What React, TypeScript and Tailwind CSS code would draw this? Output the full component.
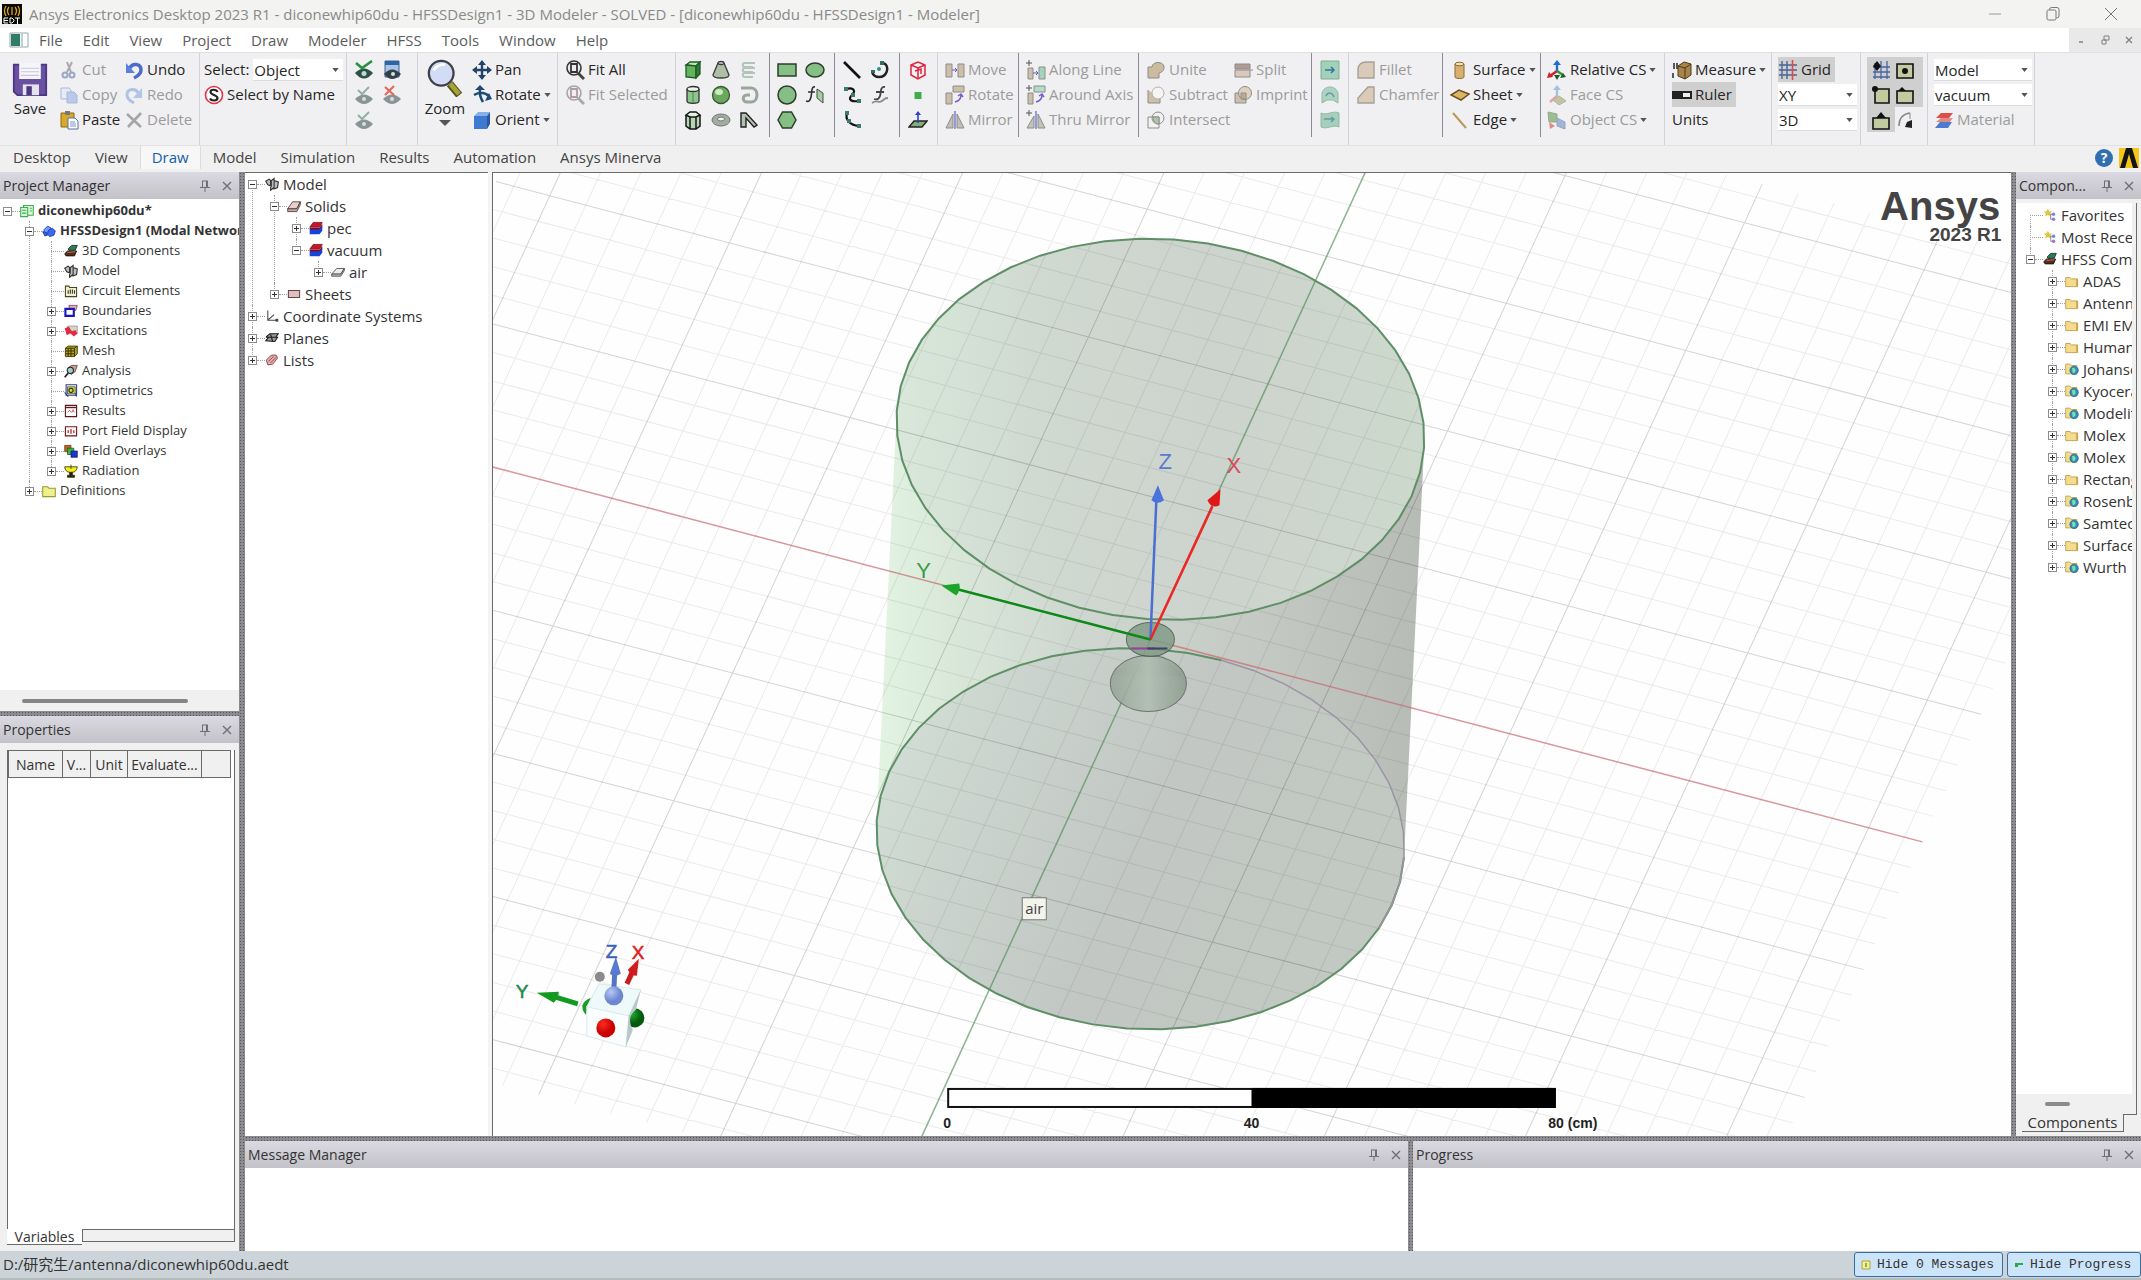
import React from 'react';

const FONT = "font-['Open_Sans','Noto_Sans_CJK_SC',sans-serif]";

const GREEN = '#86bf86';
const TAN = '#cdbfa8';
const GREY = '#8c8c8c';

// small toolbar and tree drawings, all on a 20x20 grid
const ICONS: Record<string, React.ReactNode> = {
  save: (
    <>
      <path d="M1 2h18v17H3l-2-2z" fill="#6a50a0" stroke="#4b3680" />
      <path d="M4 1h12v9H4z" fill="#f6f6fa" />
      <path d="M5 4h10M5 6h10M5 8h10" stroke="#c9c9d6" strokeWidth=".6" />
      <path d="M6 13h9v6H6z" fill="#e4e2ee" />
      <path d="M8 14h3v5H8z" fill="#4b3680" />
    </>
  ),
  cut: (
    <g fill="none" stroke="#9aa7c4" strokeWidth="2">
      <path d="M8 2l4 10M13 2L8 12" stroke="#a9a9ad" />
      <circle cx="6" cy="15" r="2.5" />
      <circle cx="13" cy="15" r="2.5" />
    </g>
  ),
  copy: (
    <g stroke="#a9b9d6" fill="#e6ecf7">
      <path d="M2 3h8l2 2v9H2z" />
      <path d="M8 7h7l3 3v8H8z" fill="#b9c9ea" />
    </g>
  ),
  paste: (
    <>
      <path d="M2 3h13v14H2z" fill="#d9a92a" stroke="#8a6a18" />
      <path d="M6 1h5v4H6z" fill="#777" />
      <path d="M9 8h7l3 3v8H9z" fill="#fff" stroke="#5570a8" />
      <path d="M11 12h5M11 14h6M11 16h6" stroke="#7c93c4" />
    </>
  ),
  undo: (
    <>
      <path d="M6 8c2-5 11-5 11 2 0 4-3 6-7 8" fill="none" stroke="#4a6cc8" strokeWidth="3.500" />
      <path d="M2 3v10h9z" fill="#5b7fe0" />
    </>
  ),
  redo: (
    <>
      <path d="M14 8C12 3 3 3 3 10c0 4 3 6 7 8" fill="none" stroke="#b0c2e2" strokeWidth="3" />
      <path d="M18 3v10H9z" fill="#b4c6e6" />
    </>
  ),
  del: <path d="M3 4l14 13M17 3L4 17" stroke="#a5a5a5" strokeWidth="2.6" />,
  selname: (
    <>
      <circle cx="10" cy="10" r="8.5" fill="#fff" stroke="#e0334a" strokeWidth="1.6" />
      <path
        d="M13.500 7c-1-3-7-3-7 0s7 3 7 6-6 3.500-7.500.5"
        fill="none"
        stroke="#222"
        strokeWidth="2.2"
      />
    </>
  ),
  eyeOn: (
    <>
      <path d="M1 13q9-9 18 0-9 11-18 0z" fill="#2c5246" />
      <circle cx="10" cy="13.500" r="2.500" fill="#b9dccd" />
      <path d="M2 3l6 5 10-7" fill="none" stroke="#2a9044" strokeWidth="2.600" />
    </>
  ),
  eyeWin: (
    <>
      <path d="M3 1h14v16H3z" fill="#a9c4e6" stroke="#3f5f8c" />
      <path d="M3 1h14v4H3z" fill="#2c64a8" />
      <path d="M2 14q8-9 17 0-9 10-17 0z" fill="#33404a" />
      <circle cx="11" cy="14" r="2" fill="#d4e2e4" />
    </>
  ),
  eyeOff: (
    <>
      <path d="M1 14q9-9 18 0-9 10-18 0z" fill="#8a9494" />
      <circle cx="10" cy="14" r="2" fill="#d6dede" />
      <path d="M4 5l4 4 7-7" fill="none" stroke="#93b0a0" strokeWidth="2" />
    </>
  ),
  eyeX: (
    <>
      <path d="M1 14q9-9 18 0-9 10-18 0z" fill="#8a9494" />
      <circle cx="10" cy="14" r="2" fill="#d6dede" />
      <path d="M3 2l9 8M12 1l-9 9" stroke="#e2685c" strokeWidth="2.200" />
    </>
  ),
  zoom: (
    <>
      <path d="M12.500 13l5 6" stroke="#55551c" strokeWidth="4" />
      <path d="M12.800 13l4.500 5.400" stroke="#a8a43c" strokeWidth="2.400" />
      <circle cx="8" cy="7.500" r="6.500" fill="#d3dcf5" stroke="#3d4048" strokeWidth="1.200" />
      <path d="M4 6q2-3.500 6-3" stroke="#fff" strokeWidth="1.500" fill="none" />
    </>
  ),
  pan: (
    <>
      <path d="M10 3v14M3 10h14" stroke="#1f4468" strokeWidth="2.400" />
      <path d="M10 0l4 5H6zM10 20l4-5H6zM0 10l5-4v8zM20 10l-5-4v8z" fill="#1f4468" />
    </>
  ),
  rotate: (
    <g fill="none" stroke="#1f4a78" strokeWidth="2.600">
      <path d="M2 10q8-5 15 1M8 3q-1 8 3 14" />
      <path d="M8 0l5 5H3zM20 14l-7 2 4-8z" fill="#1f4a78" stroke="none" />
    </g>
  ),
  orient: (
    <>
      <path d="M2 6l4-4h12l-3 4z" fill="#86b0ea" />
      <path d="M2 6h13v13H2z" fill="#3f7ad0" />
      <path d="M15 6l3-4v12l-3 5z" fill="#2858a0" />
    </>
  ),
  fit: (
    <>
      <path d="M13 13l6 6" stroke="#444" strokeWidth="3" />
      <circle cx="9" cy="8" r="7" fill="#e9e9f2" stroke="#333" strokeWidth="1.600" />
      <path d="M6 4h6v8H6z" fill="none" stroke="#333" strokeWidth="1.800" />
    </>
  ),
  fitOff: (
    <>
      <path d="M13 13l6 6" stroke="#aaa" strokeWidth="3" />
      <circle cx="9" cy="8" r="7" fill="#ededf2" stroke="#a5a5a5" strokeWidth="1.600" />
      <path d="M6 4h6v8H6z" fill="none" stroke="#b09aa4" strokeWidth="1.800" />
    </>
  ),
  box: (
    <g stroke="#1f5a24" strokeWidth="1.300">
      <path d="M3 5l4-3h10l-4 4z" fill="#bfe8b4" />
      <path d="M3 5l10 1v12l-10-1z" fill="#5fb45c" />
      <path d="M13 6l4-4v12l-4 4z" fill="#2f7a34" />
    </g>
  ),
  cylinder: (
    <g stroke="#333" strokeWidth="1.300">
      <path d="M4 4v12c0 3 12 3 12 0V4" fill="#8cc68c" />
      <ellipse cx="10" cy="4" rx="6" ry="2.500" fill="#e9f5e6" />
      <path d="M10 7v11" stroke="#5a9a5a" />
    </g>
  ),
  polyhedron: (
    <g stroke="#151515" strokeWidth="1.500">
      <path d="M3 5v11l4 3h6l4-3V5" fill="#b7d6b4" />
      <path d="M3 5l4-3h6l4 3-4 2H7zM7 7v12M13 7v12" fill="#e4f2e0" />
    </g>
  ),
  cone: (
    <g stroke="#3a3f3a" strokeWidth="1.300">
      <path d="M7 3L2 15c0 4 16 4 16 0L13 3" fill="#aebfa6" />
      <ellipse cx="10" cy="3" rx="3" ry="1.500" fill="#cfd8ea" />
    </g>
  ),
  sphere: (
    <>
      <circle cx="10" cy="10" r="8.500" fill="#6aa860" stroke="#39582f" strokeWidth="1.300" />
      <ellipse cx="8" cy="7" rx="4" ry="3" fill="#cdeabf" />
    </>
  ),
  torus: (
    <>
      <ellipse cx="10" cy="10" rx="9" ry="6" fill="#a3aca3" stroke="#6d766d" />
      <ellipse cx="10" cy="9" rx="3.500" ry="2" fill="#eef2ee" stroke="#6d766d" />
    </>
  ),
  helix: (
    <g fill="none" stroke="#b4c3b8" strokeWidth="2">
      <path d="M16 3H6c-3 0-3 4 0 4h8M16 8H6c-3 0-3 4 0 4h8M16 13H6c-3 0-3 4 0 4h8" />
    </g>
  ),
  spiral: (
    <path d="M2 3h10c8 0 8 14 0 14H8c-5 0-5-7 0-7h3" fill="none" stroke="#9aa59c" strokeWidth="3" />
  ),
  bond: <path d="M2 17V3h5l11 12-3 2-8-9v9z" fill="#b3c2b0" stroke="#222" strokeWidth="1.400" />,
  rect: <path d="M1 4h18v12H1z" fill={GREEN} stroke="#2c3f2c" strokeWidth="1.500" />,
  circle: <circle cx="10" cy="10" r="9" fill={GREEN} stroke="#2c3f2c" strokeWidth="1.500" />,
  hexagon: (
    <path d="M5.500 2h9l4.500 8-4.500 8h-9L1 10z" fill={GREEN} stroke="#2c3f2c" strokeWidth="1.500" />
  ),
  ellipse: (
    <ellipse cx="10" cy="10" rx="9" ry="7" fill={GREEN} stroke="#2c3f2c" strokeWidth="1.500" />
  ),
  eqSurface: (
    <>
      <path d="M12 4l6 4v10l-6-5z" fill="#a9cba4" stroke="#3f5240" />
      <path d="M10 2C6 1 7 8 6 12s-2 5-5 4M3 7h7" fill="none" stroke="#333" strokeWidth="1.600" />
    </>
  ),
  line: <path d="M2 2l16 16" stroke="#111" strokeWidth="2.600" />,
  spline: (
    <>
      <path d="M4 4c6-2 11 1 6 6s0 7 7 6" fill="none" stroke="#111" strokeWidth="2.200" />
      <path d="M2 2h4v4H2zM15 14h4v4h-4zM9 8h4v4H9z" fill="#3a7a70" />
    </>
  ),
  arcLine: (
    <>
      <path d="M5 3c-2 6 2 12 12 13" fill="none" stroke="#111" strokeWidth="2.200" />
      <path d="M3 1h4v4H3zM5 9h4v4H5zM15 14h4v4h-4z" fill="#3a7a70" />
    </>
  ),
  arc: (
    <>
      <path d="M14 3c6 4 3 14-5 14-4 0-6-2-7-5" fill="none" stroke="#222" strokeWidth="2.400" />
      <circle cx="9" cy="9" r="2" fill="#2f9088" />
      <path d="M10 1h4v4h-4zM1 10h4v3H1z" fill="#2f6f68" />
    </>
  ),
  eqCurve: (
    <g fill="none" stroke="#444" strokeWidth="1.800">
      <path d="M15 2c-5-1-4 6-5 9s-3 4-6 3M6 7h8" />
      <path d="M2 18c6-4 6 1 10-2s3-3 6-3" stroke={GREY} />
    </g>
  ),
  region: (
    <g fill="none" stroke="#e0233e" strokeWidth="1.500">
      <path d="M3 5l7-3 7 3v10l-7 4-7-4z" />
      <path d="M3 5l7 3 7-3M10 8v11M7 11l6-2v5" />
    </g>
  ),
  point: <path d="M6.500 7h7v7h-7z" fill="#3fae4a" />,
  plane: (
    <>
      <path d="M1 17l5-6h13l-5 6z" fill="#7fae7c" stroke="#222" strokeWidth="1.400" />
      <path d="M10 13V4" stroke="#2b3fd0" strokeWidth="1.600" />
      <path d="M10 1l3 4H7z" fill="#2b3fd0" />
    </>
  ),
  move: (
    <>
      <path d="M1 4h6v13H1zM13 4h6v13h-6z" fill={TAN} stroke={GREY} />
      <path d="M7 10h5M10 8l2 2-2 2" stroke="#5b5bd0" fill="none" />
    </>
  ),
  rot: (
    <>
      <path d="M8 1h11v6H8zM1 8h6v11H1z" fill={TAN} stroke={GREY} />
      <path d="M10 17c4-1 6-3 6-7M13 11l3-2 2 3" stroke="#7a5bd0" fill="none" strokeWidth="1.500" />
    </>
  ),
  mirror: (
    <>
      <path d="M8 4v14H1zM12 4v14h7z" fill="#c3bfb8" stroke={GREY} />
      <path d="M10 1v18" stroke="#6b6bc8" strokeWidth="1.300" />
    </>
  ),
  alongLine: (
    <>
      <path d="M3 0v6M0 3h6" stroke="#555" />
      <path d="M2 8h5v11H2z" fill={TAN} stroke={GREY} />
      <path d="M13 7h6v12h-6z" fill="#a7d3bd" stroke={GREY} />
      <path d="M7 13h5M10 11l2 2-2 2" stroke="#5b5bd0" fill="none" />
    </>
  ),
  aroundAxis: (
    <>
      <path d="M3 0v6M0 3h6" stroke="#555" />
      <path d="M8 1h11v6H8z" fill="#b4dccb" stroke={GREY} />
      <path d="M2 8h5v11H2z" fill={TAN} stroke={GREY} />
      <path d="M10 17c4-1 6-3 6-7M13 11l3-2 2 3" stroke="#7a5bd0" fill="none" strokeWidth="1.500" />
    </>
  ),
  thruMirror: (
    <>
      <path d="M3 0v6M0 3h6" stroke="#555" />
      <path d="M8 6v12H1zM12 4v14h7z" fill="#c3c3b8" stroke={GREY} />
      <path d="M10 1v18" stroke="#6b6bc8" strokeWidth="1.300" />
    </>
  ),
  unite: <path d="M2 18V7h4c0-6 12-6 12 0 0 4-2 5-5 6v5z" fill="#cdbb9e" stroke={GREY} />,
  subtract: (
    <>
      <path d="M2 5v13h12v-5" fill={TAN} stroke={GREY} />
      <circle cx="12" cy="8" r="6" fill="#f7f5f2" stroke="#b5b0aa" />
    </>
  ),
  intersect: (
    <>
      <path d="M2 7h11v11H2z" fill="#f1f1ee" stroke={GREY} />
      <circle cx="12" cy="8" r="6" fill="none" stroke={GREY} />
      <path d="M7 7h6v7c-4 0-6-3-6-7z" fill="#a9c9a4" stroke={GREY} />
    </>
  ),
  split: (
    <>
      <path d="M2 4h15v5H2z" fill="#b39a94" stroke={GREY} />
      <path d="M2 10h15v7H2z" fill="#d9c9bd" stroke={GREY} />
      <path d="M17 10h3" stroke={GREY} />
    </>
  ),
  imprint: (
    <>
      <path d="M2 8h11v10H2z" fill={TAN} stroke={GREY} />
      <circle cx="12" cy="8" r="6.500" fill="#ddd2c0" stroke={GREY} />
      <path d="M8 8h5v6H8z" fill="#c0ab8c" stroke={GREY} />
    </>
  ),
  sweepA: (
    <>
      <path d="M1 1h18v18H1z" fill="#9fd2b8" stroke="#8aa898" />
      <path d="M5 10h9M11 7l3 3-3 3" fill="none" stroke="#3f6fa0" strokeWidth="1.500" />
    </>
  ),
  sweepB: (
    <>
      <path d="M2 18V8c2-8 14-8 16 0v10l-5-3H7z" fill="#a9d4bf" stroke="#9ab5a8" />
      <path d="M6 11c2-4 6-4 8 1" fill="none" stroke="#6f93a8" strokeWidth="1.500" />
    </>
  ),
  sweepC: (
    <>
      <path d="M1 3c6 3 12-3 18 0v14c-6-3-12 3-18 0z" fill="#a3d0bd" stroke="#9ab5a8" />
      <path d="M4 9h10M11 7l3 2-3 3" fill="none" stroke="#6f93a8" strokeWidth="1.500" />
    </>
  ),
  fillet: <path d="M2 18V9q1-7 8-7h8v16z" fill="#dccab9" stroke="#a5a09a" strokeWidth="1.400" />,
  chamfer: <path d="M2 18v-5L12 2h6v16z" fill="#dccab9" stroke="#a5a09a" strokeWidth="1.400" />,
  surface: (
    <>
      <path d="M5 4v13c0 2 9 2 9 0V4" fill="#d6b06c" stroke="#8a6a3a" />
      <ellipse cx="9.500" cy="4" rx="4.500" ry="1.800" fill="#f1dcb0" stroke="#8a6a3a" />
    </>
  ),
  sheet: <path d="M1 10l8-5 10 4-8 6z" fill="#dcb468" stroke="#6e5220" strokeWidth="1.500" />,
  edge: <path d="M3 3l13 15" stroke="#b59a5a" strokeWidth="2" />,
  cs: (
    <>
      <path d="M10 3v8" stroke="#1a6fd0" strokeWidth="2.400" />
      <path d="M10 0l4 5H6z" fill="#1a6fd0" />
      <path d="M10 11l-7 5" stroke="#d0202c" strokeWidth="2.600" />
      <path d="M0 18l2-6 4 5z" fill="#d0202c" />
      <path d="M10 11l6 4" stroke="#2f9a3c" strokeWidth="2.600" />
      <path d="M19 17l-6 1 3-5zM10 20l-3-5h6z" fill="#1d5a2c" />
    </>
  ),
  csFace: (
    <>
      <path d="M10 3v8" stroke="#9fc4e0" strokeWidth="2.400" />
      <path d="M10 0l4 5H6z" fill="#9fc4e0" />
      <path d="M10 11l-7 6" stroke="#e8a0a0" strokeWidth="2.400" />
      <path d="M6 15l6-4 7 5-7 4z" fill="#c7c2a0" stroke="#a5b5a0" />
    </>
  ),
  csObj: (
    <>
      <path d="M1 2l9 2v8H2z" fill="#9ac08e" stroke="#9aa59a" />
      <path d="M10 8l8 4v7l-8-3z" fill="#9fb6da" stroke="#9aa5b5" />
      <path d="M2 12l6 4-5 3z" fill="#e08a8a" />
    </>
  ),
  measure: (
    <>
      <path d="M2 3v6M5 3v6M1 13v5" stroke="#333" strokeWidth="1.600" />
      <path d="M6 6l6-4 7 2v11l-6 4-7-3z" fill="#a8834a" stroke="#4f3a18" />
      <path d="M6 6l7 2 6-4M13 8v11" fill="none" stroke="#4f3a18" />
    </>
  ),
  ruler: (
    <>
      <path d="M0 6h20v8H0z" fill="#222" />
      <path d="M11 8h7v4h-7z" fill="#eee" />
    </>
  ),
  grid: (
    <>
      <path d="M4 1v18M9 1v18M1 5h18M1 10h18M1 15h18" stroke="#4a6496" strokeWidth="1.400" />
      <path d="M14.500 0v20" stroke="#e04848" strokeWidth="1.600" />
    </>
  ),
  snapGrid: (
    <>
      <path d="M4 3v16M10 1v18M16 1v18M2 7h17M2 12h17M2 17h17" stroke="#4a64a0" strokeWidth="1.300" />
      <path d="M6 1l4 5-4 5-4-5z" fill="#111" />
    </>
  ),
  snapCenter: (
    <>
      <path d="M2 4h16v14H2z" fill="#c2cba0" stroke="#111" strokeWidth="1.600" />
      <circle cx="10" cy="11" r="3" fill="#111" />
    </>
  ),
  snapVertex: (
    <>
      <path d="M4 4h14v14H4z" fill="#c2cba0" stroke="#111" strokeWidth="1.600" />
      <circle cx="4" cy="4" r="3" fill="#111" />
    </>
  ),
  snapEdge: (
    <>
      <path d="M2 6h16v12H2z" fill="#c2cba0" stroke="#111" strokeWidth="1.600" />
      <path d="M3 6l4-4 4 4z" fill="#111" />
    </>
  ),
  snapMid: (
    <>
      <path d="M2 8h16v11H2z" fill="#c2cba0" stroke="#111" strokeWidth="1.600" />
      <path d="M5 8l5-6 5 6z" fill="#111" />
    </>
  ),
  snapArc: (
    <>
      <path d="M4 16C4 8 8 4 15 3" fill="none" stroke="#888" strokeWidth="1.600" />
      <path d="M15 3v6" stroke="#888" />
      <path d="M12 12l5-2v8l-7-1z" fill="#222" />
    </>
  ),
  material: (
    <>
      <path d="M2 8l5-5h12l-4 5z" fill="#d8504c" />
      <path d="M2 12l5-4h12l-4 5z" fill="#e08a86" />
      <path d="M1 18l5-6h12l-4 6z" fill="#4c7ad0" />
    </>
  ),
  project: (
    <g fill="#dff7df" stroke="#36b04a" strokeWidth="1.500">
      <path d="M5 2h14v14H5z" />
      <path d="M1 5h10v13H1zM3 9h6M3 13h6M14 6h3M14 10h3" />
    </g>
  ),
  design: (
    <g fill="#3a6af0" stroke="#1a2fb0" strokeWidth="1.200">
      <path d="M3 8l5-5 5 3 1 5-6 3-5-2z" fill="#6fa0ff" />
      <path d="M9 9l6-3 4 4-2 6-6 2-3-4z" />
      <path d="M1 11l5 1 2 4-4 1z" />
    </g>
  ),
  comp3d: (
    <g strokeWidth="1.200">
      <path d="M6 7l5-5h8l-3 7H7z" fill="#2f7a5a" stroke="#142a22" />
      <path d="M1 14l4-4h13l-3 7H3z" fill="#5a2a1e" stroke="#1a0e0a" />
      <path d="M5 12l11-1" stroke="#d08a6a" />
    </g>
  ),
  model: (
    <g fill="#bdbdbd" stroke="#333" strokeWidth="1.600">
      <path d="M1 6l5-3 3 3v7l-5-2zM8 6l5-4v13l-5 4zM13 5l6 2-1 8-5 2z" />
    </g>
  ),
  circuit: (
    <g strokeWidth="1.500">
      <path d="M2 3h5l1 2h10v13H2z" fill="#f2f0cc" stroke="#4a4420" />
      <path d="M6 9v5M9 8v6M12 8v6M15 9v5" stroke="#333" />
    </g>
  ),
  boundary: (
    <>
      <path d="M7 2h12l-2 7H8z" fill="#e8b4a4" stroke="#5a2a60" />
      <path d="M2 7h12v10H2z" fill="#fff" stroke="#1818c0" strokeWidth="3" />
    </>
  ),
  excitation: (
    <>
      <path d="M5 3h14v11H5z" fill="#cfd8cf" stroke="#888" />
      <path d="M1 6l6-2 4 6 6-1 2 5-5 4-5-5-5 3z" fill="#e62840" />
    </>
  ),
  mesh: (
    <g strokeWidth="1.300">
      <path d="M2 6l4-3h13v11l-4 4H2z" fill="#b5a51c" stroke="#3f3a08" />
      <path d="M2 10h13M2 14h13M6 6v12M10 6v12M15 6v12M2 6h13l4-3" stroke="#2f2a04" fill="none" />
    </g>
  ),
  analysis: (
    <>
      <path d="M6 5l5-3h8l-3 9-6 4z" fill="#d89a8c" stroke="#333" />
      <circle cx="9" cy="9" r="4.500" fill="#9ad0c8" stroke="#222" strokeWidth="1.500" />
      <path d="M6 13l-5 6" stroke="#222" strokeWidth="2.400" />
    </>
  ),
  optimetrics: (
    <>
      <path d="M3 1h15v15H3z" fill="#fff" stroke="#2a3a90" strokeWidth="1.500" />
      <path d="M5 4h11v10H5z" fill="#d4e02c" stroke="#333" />
      <circle cx="10" cy="9" r="3" fill="none" stroke="#222" strokeWidth="1.500" />
      <path d="M1 12l5 6M16 13l2 5" stroke="#2a3a90" strokeWidth="1.500" />
    </>
  ),
  results: (
    <>
      <path d="M2 2h16v16H2z" fill="#fff" stroke="#5a1a1a" strokeWidth="1.600" />
      <path d="M2 5h16" stroke="#5a1a1a" strokeWidth="2" />
      <path d="M5 12l3-3 3 3 3-4M12 8l3 4" fill="none" stroke="#e03030" strokeWidth="1.200" />
    </>
  ),
  port: (
    <>
      <path d="M2 4h16v13H2z" fill="#fff" stroke="#6a1a1a" strokeWidth="1.600" />
      <path d="M6 13V9M10 14V7M14 13V9" stroke="#e02a2a" strokeWidth="2" />
    </>
  ),
  overlays: (
    <>
      <path d="M1 2h9v9H1z" fill="#c0602a" stroke="#5a3a10" />
      <path d="M5 6h9v9H5z" fill="#35b83a" stroke="#0f5a14" />
      <path d="M10 10h9v9h-9z" fill="#1c34d0" stroke="#0a1470" />
    </>
  ),
  radiation: (
    <g stroke="#3a3400" strokeWidth="1.200">
      <path d="M1 4h18c-1 7-5 8-9 8S2 11 1 4z" fill="#f2ee1c" />
      <path d="M8 12h4v4h3v3H5v-3h3z" fill="#222" />
      <path d="M10 1v6" />
    </g>
  ),
  folder: (
    <>
      <path d="M1 5h6l2 2h9v11H1z" fill="#f5dc8c" stroke="#b9974a" strokeWidth="1.200" />
      <path d="M16 7h2v11h-2z" fill="#cf9f3c" />
    </>
  ),
  folderYellow: (
    <path d="M1 4h7l2 2h9v12H1z" fill="#f0f08c" stroke="#9a9a30" strokeWidth="1.500" />
  ),
  folderWeb: (
    <>
      <path d="M1 3h6l2 2h8v12H1z" fill="#f3dd92" stroke="#b9a04a" strokeWidth="1.200" />
      <circle cx="13" cy="12" r="6" fill="#2f8fb8" stroke="#1c5f78" />
      <path d="M10 9q4-2 5 2t-4 5z" fill="#7fdcb4" />
    </>
  ),
  solid: (
    <g stroke="#4a3434" strokeWidth="1.200">
      <path d="M1 14L8 4h11l-5 10z" fill="#e8cfcc" />
      <path d="M1 14h13l5-10v4l-5 10H1z" fill="#c4a8a6" />
    </g>
  ),
  solidGrey: (
    <g stroke="#4a4a4a" strokeWidth="1.200">
      <path d="M1 13L8 5h11l-5 8z" fill="#ececec" />
      <path d="M1 13h13l5-8v3l-5 8H1z" fill="#bdbdbd" />
    </g>
  ),
  layers: (
    <>
      <path d="M1 9l5-7h13l-4 7z" fill="#cc1226" stroke="#5a0a14" />
      <path d="M1 10h14l4-6v5l-4 4H1z" fill="#7a0a1c" />
      <path d="M1 12h14l4-4v6l-4 5H1z" fill="#1444dc" />
    </>
  ),
  sheets: <path d="M2 5h16v10H2z" fill="#e0bfbf" stroke="#6a4444" strokeWidth="1.500" />,
  axes: (
    <>
      <path d="M4 2v14h13M4 16l9-8" fill="none" stroke="#444" strokeWidth="1.500" />
      <path d="M15 14h4v4h-4z" fill="#444" />
    </>
  ),
  planes: (
    <g fill="#9a9a9a" stroke="#1a1a1a" strokeWidth="1.500">
      <path d="M2 8l5-4h12l-4 5H2zM1 14l4-5h13l-4 6z" />
      <path d="M8 5l3 10" />
    </g>
  ),
  lists: (
    <g fill="#e0aeb0" stroke="#8a4448" strokeWidth="1.300">
      <path d="M2 10l7-7h7l2 4-7 9-7 1z" />
      <path d="M5 12l7-7M8 14l8-8" />
    </g>
  ),
  fav: (
    <>
      <path d="M7 1l2 4h4l-3 3 1 4-4-2-4 2 1-4-3-3h4z" fill="#e0c43c" />
      <path d="M11 8v8h3M11 9h4" stroke="#666" fill="none" />
      <circle cx="15" cy="9" r="2.500" fill="#6f8ae0" />
      <circle cx="15" cy="16" r="2.500" fill="#9a7ad8" />
    </>
  ),
};

type IconProps = { name: string; className?: string };

const Icon = ({ name, className = 'h-5 w-5' }: IconProps) => (
  <svg viewBox="0 0 20 20" className={`${className} flex-none`} aria-hidden="true">
    {ICONS[name]}
  </svg>
);

const Caret = () => (
  <svg viewBox="0 0 8 5" className="h-1 w-[7px] flex-none" aria-hidden="true">
    <path d="M0 0h8L4 5z" fill="#555" />
  </svg>
);

type ToolProps = {
  icon?: string;
  label?: string;
  disabled?: boolean;
  arrow?: boolean;
  active?: boolean;
};

const Tool = ({ icon, label, disabled, arrow, active }: ToolProps) => (
  <button
    type="button"
    disabled={disabled}
    aria-label={label ?? icon}
    className={`flex h-[25px] items-center gap-[3px] whitespace-nowrap ${
      disabled ? 'text-[#9b9b9b]' : 'text-[#262626]'
    } ${active ? 'bg-[#cfcfcf] pr-1' : ''}`}
  >
    {icon && <Icon name={icon} />}
    {label && <span>{label}</span>}
    {arrow && <Caret />}
  </button>
);

type ColProps = { className: string; children: React.ReactNode };

const Col = ({ className, children }: ColProps) => (
  <div className={`flex flex-none flex-col items-start ${className}`}>{children}</div>
);

const Group = ({ className, children }: ColProps) => (
  <div className={`flex h-full flex-none border-r border-[#d2d2dc] pt-1 ${className}`}>
    {children}
  </div>
);

const Divided = ({ className, children }: ColProps) => (
  <div className={`flex h-[84px] flex-none self-start border-r border-[#8a8a96] pt-1 ${className}`}>
    {children}
  </div>
);

type DropProps = { label: string; value: string; className: string };

const Drop = ({ label, value, className }: DropProps) => (
  <div className={`relative flex items-center ${className}`}>
    <select
      aria-label={label}
      defaultValue={value}
      className="h-full w-full appearance-none border-b border-[#dcdcdc] bg-white pl-px text-[#262626]"
    >
      <option>{value}</option>
    </select>
    <span className="pointer-events-none absolute right-1">
      <Caret />
    </span>
  </div>
);

const MENUS = ['File', 'Edit', 'View', 'Project', 'Draw', 'Modeler', 'HFSS', 'Tools', 'Window', 'Help'];
const TABS = ['Desktop', 'View', 'Draw', 'Model', 'Simulation', 'Results', 'Automation', 'Ansys Minerva'];

const TitleBar = () => (
  <header className="flex h-7 flex-none items-center bg-[#f3f3f1] pl-[2px] text-[15px] text-[#8a8a8a]">
    <svg viewBox="0 0 20 20" className="h-5 w-5 flex-none" aria-hidden="true">
      <path d="M0 0h20v20H0z" fill="#0c0b08" />
      <g fill="none" stroke="#d9a520" strokeWidth="1.300">
        <path d="M7 3q-3 4 0 8M4 2q-3 5 0 10M13 3q3 4 0 8M16 2q3 5 0 10" />
        <path d="M10 3v8" />
      </g>
      <path
        d="M2 14h4M2 16.500h4M2 19h4M2 14v5M8 14v5h2l2-2v-1l-2-2zM13 14h5M15.500 14v6"
        stroke="#fff"
        fill="none"
      />
    </svg>
    <h1 className="ml-[7px] flex-1 truncate">
      Ansys Electronics Desktop 2023 R1 - diconewhip60du - HFSSDesign1 - 3D Modeler - SOLVED -
      [diconewhip60du - HFSSDesign1 - Modeler]
    </h1>
    <div className="flex gap-[42px] pr-[22px]">
      <button type="button" aria-label="Minimize">
        <svg viewBox="0 0 16 16" className="h-4 w-4">
          <path d="M2 8h12" stroke="#9a9a9a" />
        </svg>
      </button>
      <button type="button" aria-label="Restore">
        <svg viewBox="0 0 16 16" className="h-4 w-4" fill="none" stroke="#777">
          <rect x="2" y="4" width="9" height="10" rx="1.500" />
          <path d="M4.500 4V3.500q0-2 2-2H12q2 0 2 2V10q0 2-2.500 2" />
        </svg>
      </button>
      <button type="button" aria-label="Close">
        <svg viewBox="0 0 16 16" className="h-4 w-4">
          <path d="M2 2l12 12M14 2L2 14" stroke="#777" />
        </svg>
      </button>
    </div>
  </header>
);

const MenuBar = () => (
  <nav className="flex h-6 flex-none items-center bg-white pl-[9px] text-[15px] text-[#5c5c5c]">
    <svg viewBox="0 0 20 16" className="mr-[10px] h-4 w-5 flex-none" aria-hidden="true">
      <path d="M1 1h18v14H1z" fill="#fff" stroke="#9aa5a5" />
      <path d="M2 2h9v12H2z" fill="#2f7d68" />
      <path d="M13 2v12" stroke="#b5d8cc" strokeWidth="2" />
    </svg>
    <div className="flex flex-1 gap-5">
      {MENUS.map((m) => (
        <button key={m} type="button">
          {m}
        </button>
      ))}
    </div>
    <div className="flex h-full w-[72px] items-center justify-around bg-[#e9e9e9] text-[#808080]">
      <button type="button" aria-label="Minimize document">
        <svg viewBox="0 0 10 10" className="h-2.5 w-2.5">
          <path d="M3 7h4" stroke="currentColor" strokeWidth="1.500" />
        </svg>
      </button>
      <button type="button" aria-label="Restore document">
        <svg viewBox="0 0 10 10" className="h-2.5 w-2.5" fill="none" stroke="currentColor">
          <path d="M4 1h5v4H4zM2 5h4v4H2z" />
        </svg>
      </button>
      <button type="button" aria-label="Close document">
        <svg viewBox="0 0 10 10" className="h-2.5 w-2.5">
          <path d="M2 2l6 6M8 2L2 8" stroke="currentColor" strokeWidth="1.300" />
        </svg>
      </button>
    </div>
  </nav>
);

const Ribbon = () => (
  <div className="flex h-[93px] flex-none overflow-hidden border-t border-[#e0e0e0] bg-[#f0f0f2] text-[15px]">
    <Group className="w-[200px] pl-[5px]">
      <button
        type="button"
        className="flex w-[50px] flex-none flex-col items-center pt-1 text-[#262626]"
      >
        <Icon name="save" className="h-9 w-9" />
        <span>Save</span>
      </button>
      <Col className="w-[67px] pl-1">
        <Tool icon="cut" label="Cut" disabled />
        <Tool icon="copy" label="Copy" disabled />
        <Tool icon="paste" label="Paste" />
      </Col>
      <Col className="pl-0.5">
        <Tool icon="undo" label="Undo" />
        <Tool icon="redo" label="Redo" disabled />
        <Tool icon="del" label="Delete" disabled />
      </Col>
    </Group>
    <Group className="w-[147px] pl-1">
      <Col className="w-full">
        <label className="flex h-[25px] w-full items-center gap-1 text-[#262626]">
          Select:
          <Drop label="Select" value="Object" className="h-[22px] w-[90px]" />
        </label>
        <Tool icon="selname" label="Select by Name" />
      </Col>
    </Group>
    <Group className="w-[71px] pl-[7px]">
      <Col className="w-7">
        <Tool icon="eyeOn" />
        <Tool icon="eyeOff" />
        <Tool icon="eyeOff" />
      </Col>
      <Col className="w-7">
        <Tool icon="eyeWin" />
        <Tool icon="eyeX" />
      </Col>
    </Group>
    <Group className="w-[140px] pl-1">
      <button
        type="button"
        className="flex w-[46px] flex-none flex-col items-center pt-[2px] text-[#262626]"
      >
        <Icon name="zoom" className="h-[38px] w-[38px]" />
        <span>Zoom</span>
        <svg viewBox="0 0 12 6" className="h-1.5 w-3" aria-hidden="true">
          <path d="M0 0h12L6 6z" fill="#555" />
        </svg>
      </button>
      <Col className="pl-1">
        <Tool icon="pan" label="Pan" />
        <Tool icon="rotate" label="Rotate" arrow />
        <Tool icon="orient" label="Orient" arrow />
      </Col>
    </Group>
    <Group className="w-[118px] pl-[7px]">
      <Col className="w-full">
        <Tool icon="fit" label="Fit All" />
        <Tool icon="fitOff" label="Fit Selected" disabled />
      </Col>
    </Group>
    <Divided className="w-[94px] gap-2 pl-[7px]">
      <Col className="w-5">
        <Tool icon="box" />
        <Tool icon="cylinder" />
        <Tool icon="polyhedron" />
      </Col>
      <Col className="w-5">
        <Tool icon="cone" />
        <Tool icon="sphere" />
        <Tool icon="torus" />
      </Col>
      <Col className="w-5">
        <Tool icon="helix" />
        <Tool icon="spiral" />
        <Tool icon="bond" />
      </Col>
    </Divided>
    <Divided className="w-[65px] gap-2 pl-[7px]">
      <Col className="w-5">
        <Tool icon="rect" />
        <Tool icon="circle" />
        <Tool icon="hexagon" />
      </Col>
      <Col className="w-5">
        <Tool icon="ellipse" />
        <Tool icon="eqSurface" />
      </Col>
    </Divided>
    <Divided className="w-[65px] gap-2 pl-[7px]">
      <Col className="w-5">
        <Tool icon="line" />
        <Tool icon="spline" />
        <Tool icon="arcLine" />
      </Col>
      <Col className="w-5">
        <Tool icon="arc" />
        <Tool icon="eqCurve" />
      </Col>
    </Divided>
    <Group className="w-[38px] pl-2">
      <Col className="w-5">
        <Tool icon="region" />
        <Tool icon="point" />
        <Tool icon="plane" />
      </Col>
    </Group>
    <Divided className="w-[81px] pl-[7px]">
      <Col className="w-full">
        <Tool icon="move" label="Move" disabled />
        <Tool icon="rot" label="Rotate" disabled />
        <Tool icon="mirror" label="Mirror" disabled />
      </Col>
    </Divided>
    <Divided className="w-[120px] pl-[7px]">
      <Col className="w-full">
        <Tool icon="alongLine" label="Along Line" disabled />
        <Tool icon="aroundAxis" label="Around Axis" disabled />
        <Tool icon="thruMirror" label="Thru Mirror" disabled />
      </Col>
    </Divided>
    <Divided className="w-[173px] pl-[7px]">
      <Col className="w-[87px]">
        <Tool icon="unite" label="Unite" disabled />
        <Tool icon="subtract" label="Subtract" disabled />
        <Tool icon="intersect" label="Intersect" disabled />
      </Col>
      <Col className="w-[76px]">
        <Tool icon="split" label="Split" disabled />
        <Tool icon="imprint" label="Imprint" disabled />
      </Col>
    </Divided>
    <Group className="w-[37px] pl-2">
      <Col className="w-5">
        <Tool icon="sweepA" disabled />
        <Tool icon="sweepB" disabled />
        <Tool icon="sweepC" disabled />
      </Col>
    </Group>
    <Divided className="w-[94px] pl-[7px]">
      <Col className="w-full">
        <Tool icon="fillet" label="Fillet" disabled />
        <Tool icon="chamfer" label="Chamfer" disabled />
      </Col>
    </Divided>
    <Divided className="w-[98px] pl-[7px]">
      <Col className="w-full">
        <Tool icon="surface" label="Surface" arrow />
        <Tool icon="sheet" label="Sheet" arrow />
        <Tool icon="edge" label="Edge" arrow />
      </Col>
    </Divided>
    <Group className="w-[124px] pl-1.5">
      <Col className="w-full">
        <Tool icon="cs" label="Relative CS" arrow />
        <Tool icon="csFace" label="Face CS" disabled />
        <Tool icon="csObj" label="Object CS" disabled arrow />
      </Col>
    </Group>
    <Group className="w-[107px] pl-[7px]">
      <Col className="w-full">
        <Tool icon="measure" label="Measure" arrow />
        <Tool icon="ruler" label="Ruler" active />
        <Tool label="Units" />
      </Col>
    </Group>
    <Group className="w-[89px] pl-1.5">
      <Col className="w-[79px]">
        <Tool icon="grid" label="Grid" active />
        <div className="flex h-[50px] w-full flex-col justify-around">
          <Drop label="Plane" value="XY" className="h-[22px] w-full" />
          <Drop label="Movement" value="3D" className="h-[22px] w-full" />
        </div>
      </Col>
    </Group>
    <Group className="w-[67px] pl-1.5">
      <Col className="w-7 self-start bg-[#cfcfcf] pl-1">
        <Tool icon="snapGrid" />
        <Tool icon="snapVertex" />
        <Tool icon="snapMid" />
      </Col>
      <Col className="w-7">
        <span className="bg-[#cfcfcf] pr-2">
          <Tool icon="snapCenter" />
          <Tool icon="snapEdge" />
        </span>
        <Tool icon="snapArc" />
      </Col>
    </Group>
    <Group className="w-[107px] pl-1.5">
      <Col className="w-[98px]">
        <div className="flex h-[50px] w-full flex-col justify-around">
          <Drop label="Object type" value="Model" className="h-[22px] w-full" />
          <Drop label="Material" value="vacuum" className="h-[22px] w-full" />
        </div>
        <Tool icon="material" label="Material" disabled />
      </Col>
    </Group>
  </div>
);

const TabBar = () => (
  <div className="mb-[3px] flex h-6 flex-none items-center border-t border-[#e2e2e2] bg-[#f0f0f0] pl-px text-[15px] text-[#444]">
    {TABS.map((t) => (
      <button
        key={t}
        type="button"
        className={`h-full border-x px-[11px] ${
          t === 'Draw' ? 'border-[#dcdcdc] bg-[#f7f7f7] text-[#1560a8]' : 'border-transparent'
        }`}
      >
        {t}
      </button>
    ))}
    <div className="flex flex-1 items-center justify-end gap-1.5 pr-0.5">
      <button
        type="button"
        aria-label="Help"
        className="flex h-[18px] w-[18px] items-center justify-center rounded-full bg-[#2f6fb0] text-sm font-bold text-white"
      >
        ?
      </button>
      <svg viewBox="0 0 20 20" className="h-5 w-5" aria-hidden="true">
        <path d="M0 0h20v20H0z" fill="#f5c518" />
        <path d="M1 20L7 0h6l6 20h-5L10 6 6 20z" fill="#141414" />
      </svg>
    </div>
  </div>
);

const Pin = () => (
  <svg viewBox="0 0 12 12" className="h-3 w-3" fill="none" stroke="#6f6f78" aria-hidden="true">
    <path d="M3.500 1v6M7.500 1v6M8.500 1v6M3 1h6M1 7.500h10M6 8v4" />
  </svg>
);

const PanelHeader = ({ title }: { title: string }) => (
  <div className="flex h-[27px] flex-none items-center bg-linear-to-b from-[#dbd9e2] to-[#c2c2c8] pl-[3px] text-sm text-[#333]">
    <h2 className="flex-1 truncate">{title}</h2>
    <div className="flex items-center gap-2.5 pr-[6px]">
      <button type="button" aria-label={`Pin ${title}`}>
        <Pin />
      </button>
      <button type="button" aria-label={`Close ${title}`}>
        <svg viewBox="0 0 12 12" className="h-3 w-3">
          <path d="M2 2l8 8M10 2l-8 8" stroke="#6f6f78" strokeWidth="1.400" />
        </svg>
      </button>
    </div>
  </div>
);

const Splitter = ({ className }: { className: string }) => (
  <div
    className={`flex-none bg-[#8b8b90] bg-[radial-gradient(#55555c_1px,transparent_1px)] bg-[length:3px_3px] ${className}`}
  />
);

type Node = {
  label: string;
  icon: string;
  open?: boolean;
  bold?: boolean;
  leaf?: boolean;
  children?: Node[];
};

const leaf = (label: string, icon: string): Node => ({ label, icon, leaf: true });
const closed = (label: string, icon: string): Node => ({ label, icon });

const PROJECT: Node[] = [
  {
    label: 'diconewhip60du*',
    icon: 'project',
    open: true,
    bold: true,
    children: [
      {
        label: 'HFSSDesign1 (Modal Network)',
        icon: 'design',
        open: true,
        bold: true,
        children: [
          leaf('3D Components', 'comp3d'),
          leaf('Model', 'model'),
          leaf('Circuit Elements', 'circuit'),
          closed('Boundaries', 'boundary'),
          closed('Excitations', 'excitation'),
          leaf('Mesh', 'mesh'),
          closed('Analysis', 'analysis'),
          leaf('Optimetrics', 'optimetrics'),
          closed('Results', 'results'),
          closed('Port Field Display', 'port'),
          closed('Field Overlays', 'overlays'),
          closed('Radiation', 'radiation'),
        ],
      },
      closed('Definitions', 'folderYellow'),
    ],
  },
];

const MODEL: Node[] = [
  {
    label: 'Model',
    icon: 'model',
    open: true,
    children: [
      {
        label: 'Solids',
        icon: 'solid',
        open: true,
        children: [
          closed('pec', 'layers'),
          { label: 'vacuum', icon: 'layers', open: true, children: [closed('air', 'solidGrey')] },
        ],
      },
      closed('Sheets', 'sheets'),
    ],
  },
  closed('Coordinate Systems', 'axes'),
  closed('Planes', 'planes'),
  closed('Lists', 'lists'),
];

const COMPONENTS: Node[] = [
  leaf('Favorites', 'fav'),
  leaf('Most Recently Used', 'fav'),
  {
    label: 'HFSS Components',
    icon: 'comp3d',
    open: true,
    children: [
      closed('ADAS', 'folder'),
      closed('Antennas', 'folder'),
      closed('EMI EMC', 'folder'),
      closed('Human', 'folder'),
      closed('Johanson', 'folderWeb'),
      closed('Kyocera', 'folderWeb'),
      closed('Modelithics', 'folderWeb'),
      closed('Molex', 'folder'),
      closed('Molex', 'folderWeb'),
      closed('Rectangular', 'folder'),
      closed('Rosenberger', 'folderWeb'),
      closed('Samtec', 'folderWeb'),
      closed('Surface', 'folder'),
      closed('Wurth', 'folderWeb'),
    ],
  },
];

type TreeProps = { nodes: Node[]; row: string; root?: boolean };

const Tree = ({ nodes, row, root }: TreeProps) => (
  <ul className={root ? '' : 'pl-[22px]'}>
    {nodes.map((n, i) => {
      const first = root && i === 0;
      const last = i === nodes.length - 1;
      // dotted guide down the toggle column, cut to half a row at either end
      let guide = 'before:top-0 before:bottom-0';
      if (first && last) guide = 'before:hidden';
      else if (first) guide = 'before:top-[11px] before:bottom-0';
      else if (last) guide = 'before:top-0 before:h-[10px]';
      return (
        <li
          key={`${n.label}${i}`}
          className={`relative before:absolute before:left-[11px] before:border-l before:border-dotted before:border-[#a0a0a0] ${guide}`}
        >
          <div className={`flex items-center whitespace-nowrap ${row} ${n.bold ? 'font-bold' : ''}`}>
            {n.leaf ? (
              <span className="w-[11px] flex-none" />
            ) : (
              <button
                type="button"
                aria-label={`Toggle ${n.label}`}
                className="relative ml-[7px] h-[9px] w-[9px] flex-none border border-[#8c8c8c] bg-white"
              >
                <svg viewBox="0 0 7 7" className="h-[7px] w-[7px]" aria-hidden="true">
                  <path d={n.open ? 'M1 3.500h5' : 'M1 3.500h5M3.500 1v5'} stroke="#333" />
                </svg>
              </button>
            )}
            <span
              className={`flex-none border-t border-dotted border-[#a0a0a0] ${n.leaf ? 'w-[13px]' : 'w-2'}`}
            />
            <Icon name={n.icon} className="h-[14px] w-[14px]" />
            <span className="pl-1">{n.label}</span>
          </div>
          {n.children && <Tree nodes={n.children} row={row} />}
        </li>
      );
    })}
  </ul>
);

const ProjectManager = () => (
  <section className="flex min-h-0 flex-[539] flex-col">
    <PanelHeader title="Project Manager" />
    <div className="-ml-1 flex-1 overflow-hidden bg-white pt-[2px] text-[13px] text-[#333]">
      <Tree nodes={PROJECT} row="h-5" root />
    </div>
    <div className="flex h-[21px] flex-none items-center bg-[#f0f0f0] pl-[22px]">
      <div className="h-1 w-[166px] rounded-full bg-[#858585]" />
    </div>
  </section>
);

const PROPERTY_COLS = [
  { label: 'Name', width: 'w-[54px]' },
  { label: 'V...', width: 'w-[28px]' },
  { label: 'Unit', width: 'w-[37px]' },
  { label: 'Evaluate...', width: 'w-[74px]' },
  { label: '', width: 'w-[29px]' },
];

const Properties = () => (
  <section className="flex min-h-0 flex-[535] flex-col bg-[#f0f0f0]">
    <PanelHeader title="Properties" />
    <div className="mr-1 flex min-h-0 flex-1 flex-col pt-[7px] pb-[6px] pl-[7px]">
      <div className="flex-1 border-r border-l border-[#6a6a6a] bg-white pr-1">
        <table className="w-full table-fixed border-collapse text-[14px] text-[#333]">
          <thead>
            <tr className="h-[27px] bg-[#f0f0f0]">
              {PROPERTY_COLS.map((c) => (
                <th
                  key={c.label || 'blank'}
                  className={`border border-[#6a6a6a] p-0 text-center font-normal ${c.width}`}
                >
                  {c.label}
                </th>
              ))}
            </tr>
          </thead>
        </table>
      </div>
      <div className="flex h-4 flex-none text-[14px] leading-4 text-[#333]">
        <button type="button" className="w-[75px] border-b border-[#6a6a6a] bg-white">
          Variables
        </button>
        <div className="mb-[3px] flex-1 border border-[#6a6a6a]" />
      </div>
    </div>
  </section>
);

const ORIGIN = { x: 1151, y: 640 };
const STEPS = Array.from({ length: 43 }, (_, i) => i - 21);
const REACH = 21.5;

// grid cell (a, b) to drawing coordinates
const at = (a: number, b: number): [number, number] => [
  ORIGIN.x + a * 35.87 - b * 11.74,
  ORIGIN.y + a * 9.405 + b * 25.52,
];

const seg = (a1: number, b1: number, a2: number, b2: number) => {
  const [x1, y1] = at(a1, b1);
  const [x2, y2] = at(a2, b2);
  return `M${x1.toFixed(1)} ${y1.toFixed(1)}L${x2.toFixed(1)} ${y2.toFixed(1)}`;
};

const lines = (keep: (n: number) => boolean) =>
  STEPS.filter(keep)
    .map((n) => seg(n, -REACH, n, REACH) + seg(-REACH, n, REACH, n))
    .join('');

const MINOR = lines((n) => n % 5 !== 0);
const MAJOR = lines((n) => n % 5 === 0 && n !== 0);

// faceted rim of the air cylinder, tilted by four degrees; 48 facets all round
const rim = (cx: number, cy: number, from = 0, to = 48) => {
  const tilt = (4 * Math.PI) / 180;
  const pts: string[] = [];
  for (let i = from; i <= to; i++) {
    const t = (i * Math.PI) / 24;
    const x = 264 * Math.cos(t);
    const y = 190 * Math.sin(t);
    const px = cx + x * Math.cos(tilt) - y * Math.sin(tilt);
    const py = cy + x * Math.sin(tilt) + y * Math.cos(tilt);
    pts.push(`${px.toFixed(1)} ${py.toFixed(1)}`);
  }
  return pts.join('L');
};

const TOP = rim(1161, 430);
const BOTTOM = rim(1141, 839);
const HULL = `M${rim(1141, 839, 0, 24)}L${rim(1161, 430, 24, 48)}z`;

const Viewport = () => (
  <div className="min-w-0 flex-1 overflow-hidden border-t border-l border-[#6a6a6a] bg-[#fefefe]">
    <svg
      viewBox="493 174 1519 962"
      preserveAspectRatio="xMidYMid slice"
      className="block h-full w-full font-['Liberation_Sans',sans-serif]"
      role="img"
      aria-label="3D model view"
    >
      <defs>
        <linearGradient id="wall">
          <stop offset="0" stopColor="#e3f4e3" />
          <stop offset=".12" stopColor="#dae9da" />
          <stop offset=".35" stopColor="#cfd8d0" />
          <stop offset=".65" stopColor="#c6cbc6" />
          <stop offset="1" stopColor="#b6bbb6" />
        </linearGradient>
        <linearGradient id="cap">
          <stop offset="0" stopColor="#d9e8da" />
          <stop offset=".25" stopColor="#d0dad1" />
          <stop offset=".6" stopColor="#cdd3cd" />
          <stop offset="1" stopColor="#cdd9cd" />
        </linearGradient>
        <linearGradient id="foot" x1="0" y1="0" x2="1" y2=".3">
          <stop offset="0" stopColor="#d3e2d8" />
          <stop offset=".3" stopColor="#cad3cd" />
          <stop offset=".6" stopColor="#c2c7c3" />
          <stop offset="1" stopColor="#c2c8c2" />
        </linearGradient>
        <linearGradient id="cone">
          <stop offset="0" stopColor="#93a394" />
          <stop offset=".5" stopColor="#b0beb1" />
          <stop offset="1" stopColor="#8b998c" />
        </linearGradient>
        <radialGradient id="blueBall" cx=".35" cy=".3">
          <stop offset="0" stopColor="#b9c8f5" />
          <stop offset="1" stopColor="#6d86d0" />
        </radialGradient>
        <radialGradient id="redBall" cx=".35" cy=".3">
          <stop offset="0" stopColor="#ff2a20" />
          <stop offset="1" stopColor="#c80000" />
        </radialGradient>
        <radialGradient id="greenBall" cx=".35" cy=".3">
          <stop offset="0" stopColor="#1fae2c" />
          <stop offset="1" stopColor="#035a0c" />
        </radialGradient>
      </defs>

      {/* air cylinder, with the grid seen through it */}
      <path d={HULL} fill="url(#wall)" />
      <path d={`M${BOTTOM}z`} fill="url(#foot)" />
      <path d={`M${TOP}z`} fill="url(#cap)" />

      <path d={MINOR} stroke="#000" strokeOpacity=".08" />
      <path d={MAJOR} stroke="#000" strokeOpacity=".17" />
      <path d={seg(-REACH, 0, REACH, 0)} stroke="#c86a70" strokeOpacity=".7" strokeWidth="1.500" />
      <path d={seg(0, -REACH, 0, REACH)} stroke="#4f8a55" strokeOpacity=".65" strokeWidth="1.500" />

      <path d={`M${TOP}z`} fill="none" stroke="#5f8f66" strokeWidth="2" />
      <path d={`M${rim(1141, 839, 0, 38)}`} fill="none" stroke="#5f8f66" strokeWidth="2" />
      <path d={`M${rim(1141, 839, 38, 51)}`} fill="none" stroke="#9c94a4" strokeWidth="1.500" />

      {/* dicone */}
      <path d="M1143 652L1112 676L1184 676L1159 652z" fill="url(#cone)" opacity=".5" />
      <ellipse cx="1149" cy="684" rx="38" ry="28" fill="url(#cone)" stroke="#5c665e" opacity=".85" />
      <ellipse cx="1151" cy="640" rx="24" ry="17" fill="#7f9a86" stroke="#46524a" opacity=".8" />
      <path d="M1132 649h24" stroke="#9a3f9a" strokeWidth="2" />
      <path d="M1148 649h20" stroke="#3f3f6a" strokeWidth="2" />

      {/* coordinate axes at the origin */}
      <path d="M1151 640L1157 500" stroke="#4a6fd0" strokeWidth="2.500" />
      <path d="M1158.500 486L1164.500 501Q1158 506 1152 501z" fill="#4a74dc" />
      <path d="M1151 640L1213 507" stroke="#f02424" strokeWidth="2.500" />
      <path d="M1221 490L1220 506Q1212 510 1208 501z" fill="#e01818" />
      <path d="M1151 640L959 590" stroke="#0c8a18" strokeWidth="2.500" />
      <path d="M942 586L960 584Q962 590 957 596z" fill="#1aa52a" />
      <g fontSize="22">
        <text x="1159" y="470" fill="#5a7ad0">Z</text>
        <text x="1227" y="474" fill="#d8485a">X</text>
        <text x="917" y="579" fill="#3f9a48">Y</text>
      </g>

      <rect x="1023" y="898" width="24" height="22" fill="#f3f5ec" stroke="#777" />
      <text
        x="1035"
        y="914"
        fontSize="15"
        textAnchor="middle"
        fill="#444"
        className="font-['Open_Sans',sans-serif]"
      >
        air
      </text>

      {/* view triad */}
      <g>
        <circle cx="601" cy="977" r="5" fill="#8a8a8a" />
        <path d="M592 998q-14 6-5 17z" fill="#1c9a2a" />
        <circle cx="636" cy="1018" r="9.500" fill="url(#greenBall)" />
        <path d="M600 984L642 990L630 1016L588 1007z" fill="#eefafa" stroke="#dbe8ea" />
        <path d="M588 1007L630 1016L627 1047L588 1036z" fill="#fafefe" stroke="#dbe8ea" />
        <path d="M642 990L630 1016L627 1047L634 1030Q627 1018 637 1010z" fill="#b9c6ca" />
        <path d="M615 990L616 970" stroke="#5474c8" strokeWidth="5" />
        <path d="M617 957L622 974Q616 978 611 974z" fill="#5a7ad0" />
        <path d="M628 984L634 971" stroke="#c81c1c" strokeWidth="5" />
        <path d="M640 959L638 976Q632 976 629 970z" fill="#d01c1c" />
        <path d="M579 1004L556 997" stroke="#129a20" strokeWidth="5" />
        <path d="M538 993L560 992Q560 998 555 1003z" fill="#129a20" />
        <circle cx="615" cy="996" r="9.500" fill="url(#blueBall)" />
        <circle cx="607" cy="1028" r="9.500" fill="url(#redBall)" />
        <g fontSize="19" strokeWidth=".5">
          <text x="607" y="958" fill="#3a5fb8" stroke="#3a5fb8">Z</text>
          <text x="633" y="959" fill="#e02020" stroke="#e02020">X</text>
          <text x="517" y="998" fill="#1a8a4a" stroke="#1a8a4a">Y</text>
        </g>
      </g>

      <rect x="949" y="1089" width="606" height="18" fill="#fff" stroke="#111" strokeWidth="2" />
      <rect x="1252" y="1088" width="304" height="20" fill="#000" />
      <g fontSize="14" fontWeight="700" fill="#222" textAnchor="middle">
        <text x="948" y="1128">0</text>
        <text x="1252" y="1128">40</text>
        <text x="1573" y="1128">80 (cm)</text>
      </g>

      <g fontWeight="700" fill="#444" textAnchor="end">
        <text x="2000" y="221" fontSize="40">Ansys</text>
        <text x="2001" y="242" fontSize="19">2023 R1</text>
      </g>
    </svg>
  </div>
);

const ComponentsPanel = () => (
  <section className="flex w-[125px] flex-none flex-col bg-[#f0f0f0]">
    <PanelHeader title="Compon..." />
    <div className="mt-1 mr-1 flex min-h-0 flex-1 flex-col border-r border-[#6a6a6a] pr-1">
      <div className="flex-1 overflow-hidden bg-white pt-px pl-[3px] text-[15px] text-[#333]">
        <Tree nodes={COMPONENTS} row="h-[22px]" root />
      </div>
      <div className="flex h-5 flex-none items-center pl-[29px]">
        <div className="h-1 w-[25px] rounded-full bg-[#8a8a8a]" />
      </div>
    </div>
    <div className="mr-1 mb-1 flex h-[18px] flex-none pl-1.5 text-[15px] leading-[17px] text-[#333]">
      <button type="button" className="w-[102px] border-r border-b border-[#6a6a6a]">
        Components
      </button>
      <div className="flex-1 border-t border-[#6a6a6a]" />
    </div>
  </section>
);

const StatusBar = () => (
  <footer className="flex h-[29px] flex-none items-center gap-1 border-b-2 border-[#b4bcbc] bg-[#ccd4da] pl-[3px] text-[15px] text-[#333]">
    <span className="flex-1">D:/研究生/antenna/diconewhip60du.aedt</span>
    <button
      type="button"
      className="flex h-[25px] w-[149px] items-center gap-1.5 rounded-[3px] border border-[#3a6ea0] bg-[#cce4fa] pl-1.5 font-['Liberation_Mono',monospace] text-[13px] whitespace-nowrap"
    >
      <svg viewBox="0 0 10 10" className="h-2.5 w-2.5" aria-hidden="true">
        <path d="M1 1h8v8H1z" fill="#f4f08c" stroke="#a8a838" />
        <path d="M5 3v4" stroke="#555" />
      </svg>
      Hide 0 Messages
    </button>
    <button
      type="button"
      className="flex h-[25px] w-[134px] items-center gap-1.5 rounded-[3px] border border-[#3a6ea0] bg-[#cce4fa] pl-1.5 font-['Liberation_Mono',monospace] text-[13px] whitespace-nowrap"
    >
      <svg viewBox="0 0 10 10" className="h-2.5 w-2.5" aria-hidden="true">
        <path d="M1 3h8v2H4v2H1z" fill="#2fa84a" />
      </svg>
      Hide Progress
    </button>
  </footer>
);

const App = () => (
  <div className={`flex h-screen flex-col overflow-hidden bg-[#f0f0f0] ${FONT}`}>
    <TitleBar />
    <MenuBar />
    <Ribbon />
    <TabBar />
    <main className="flex min-h-0 flex-1">
      <aside className="flex w-[239px] flex-none flex-col overflow-hidden">
        <ProjectManager />
        <Splitter className="h-[5px]" />
        <Properties />
      </aside>
      <Splitter className="w-1.5" />
      <div className="flex min-w-0 flex-1 flex-col">
        <div className="flex min-h-0 flex-1">
          <div className="w-[243px] flex-none overflow-hidden border-t border-[#6a6a6a] bg-white text-[15px] text-[#333]">
            <div className="-ml-1">
              <Tree nodes={MODEL} row="h-[22px]" root />
            </div>
          </div>
          <div className="w-1 flex-none bg-[#f4f4f4]" />
          <Viewport />
          <Splitter className="w-[5px]" />
          <ComponentsPanel />
        </div>
        <Splitter className="h-[5px]" />
        <div className="flex h-[110px] flex-none">
          <section className="flex flex-[1163] flex-col bg-white">
            <PanelHeader title="Message Manager" />
          </section>
          <Splitter className="w-[5px]" />
          <section className="flex flex-[728] flex-col bg-white">
            <PanelHeader title="Progress" />
          </section>
        </div>
      </div>
    </main>
    <StatusBar />
  </div>
);

export default App;
